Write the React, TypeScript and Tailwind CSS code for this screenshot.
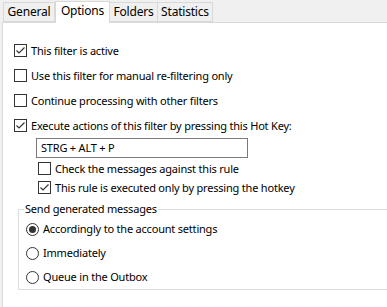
import React from 'react';

const font = { fontFamily: '"Noto Sans", "Segoe UI", sans-serif' };

const CheckBox = ({ checked }: { checked?: boolean }) => (
  <span className="w-[13px] h-[13px] border border-[#333333] bg-white flex items-center justify-center shrink-0">
    {checked && (
      <svg width="11" height="11" viewBox="0 0 11 11">
        <path d="M1.5 5.5 L4 8 L9.5 2.5" fill="none" stroke="#333333" strokeWidth="1.2" />
      </svg>
    )}
  </span>
);

const Radio = ({ checked }: { checked?: boolean }) => (
  <span className="w-[13px] h-[13px] rounded-full border border-[#333333] bg-white flex items-center justify-center shrink-0">
    {checked && <span className="w-[7px] h-[7px] rounded-full bg-[#333333]" />}
  </span>
);

const CheckRow = ({ label, checked, h }: { label: string; checked?: boolean; h: string }) => (
  <div className={`flex items-center gap-[4px] ${h}`}>
    <CheckBox checked={checked} />
    <span className="leading-none">{label}</span>
  </div>
);

const tabs = [
  { name: 'General', w: 'w-[52px]' },
  { name: 'Options', w: 'w-[55px]', active: true },
  { name: 'Folders', w: 'w-[49px]' },
  { name: 'Statistics', w: 'w-[56px]' },
];

export default function App() {
  return (
    <div
      className="w-[387px] h-[307px] bg-[#f0f0f0] overflow-hidden text-[11px] tracking-[-0.2px] text-black"
      style={font}
    >
      {/* Tab strip */}
      <div className="flex items-end h-[22px] pl-[3px]">
        {tabs.map(t =>
          t.active ? (
            <div
              key={t.name}
              className={`${t.w} h-[22px] -mb-px bg-white border border-b-0 border-[#d9d9d9] flex items-center justify-center pb-[3px] relative z-10 text-[12px]`}
            >
              {t.name}
            </div>
          ) : (
            <div
              key={t.name}
              className={`${t.w} h-[20px] bg-[#f0f0f0] border border-[#d9d9d9] -ml-px first:ml-0 flex items-center justify-center text-[12px]`}
            >
              {t.name}
            </div>
          )
        )}
      </div>

      {/* Page */}
      <div className="ml-[2px] h-[290px] bg-white border-l border-t border-[#d9d9d9] pt-[15px] pl-[11px]">
        <CheckRow label="This filter is active" checked h="h-[25px]" />
        <CheckRow label="Use this filter for manual re-filtering only" h="h-[25px]" />
        <CheckRow label="Continue processing with other filters" h="h-[25px]" />
        <CheckRow label="Execute actions of this filter by pressing this Hot Key:" checked h="h-[25px]" />

        <div className="ml-[22px] w-[212px] h-[20px] border border-[#7a7a7a] flex items-center pl-[4px]">
          STRG + ALT + P
        </div>

        <div className="ml-[24px] mt-[1px]">
          <CheckRow label="Check the messages against this rule" h="h-[19px]" />
          <CheckRow label="This rule is executed only by pressing the hotkey" checked h="h-[19px]" />
        </div>

        <fieldset className="ml-[4px] mt-[5px] w-[380px] h-[88px] border border-[#dcdcdc] px-[7px] pt-[3px]">
          <legend className="px-[1px] -ml-[2px] leading-[14px]">Send generated messages</legend>
          <div className="flex items-center gap-[4px] h-[24px] -mt-[2px]">
            <Radio checked />
            <span>Accordingly to the account settings</span>
          </div>
          <div className="flex items-center gap-[4px] h-[24px]">
            <Radio />
            <span>Immediately</span>
          </div>
          <div className="flex items-center gap-[4px] h-[24px]">
            <Radio />
            <span>Queue in the Outbox</span>
          </div>
        </fieldset>
      </div>
    </div>
  );
}
